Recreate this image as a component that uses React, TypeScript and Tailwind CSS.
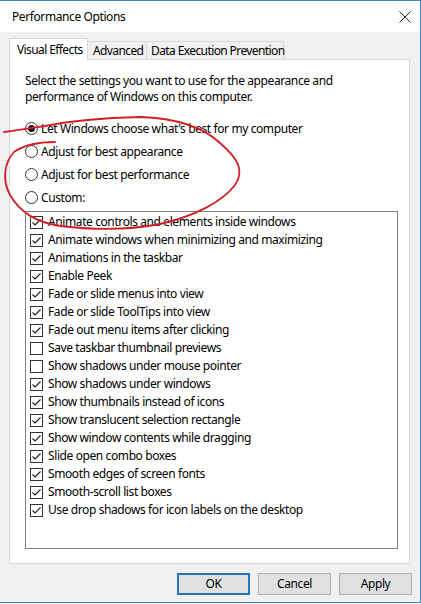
import React from 'react'

const effects: { label: string; checked: boolean }[] = [
  { label: 'Animate controls and elements inside windows', checked: true },
  { label: 'Animate windows when minimizing and maximizing', checked: true },
  { label: 'Animations in the taskbar', checked: true },
  { label: 'Enable Peek', checked: true },
  { label: 'Fade or slide menus into view', checked: true },
  { label: 'Fade or slide ToolTips into view', checked: true },
  { label: 'Fade out menu items after clicking', checked: true },
  { label: 'Save taskbar thumbnail previews', checked: false },
  { label: 'Show shadows under mouse pointer', checked: false },
  { label: 'Show shadows under windows', checked: true },
  { label: 'Show thumbnails instead of icons', checked: true },
  { label: 'Show translucent selection rectangle', checked: true },
  { label: 'Show window contents while dragging', checked: true },
  { label: 'Slide open combo boxes', checked: true },
  { label: 'Smooth edges of screen fonts', checked: true },
  { label: 'Smooth-scroll list boxes', checked: true },
  { label: 'Use drop shadows for icon labels on the desktop', checked: true },
]

const radios = [
  { label: "Let Windows choose what's best for my computer", selected: true },
  { label: 'Adjust for best appearance', selected: false },
  { label: 'Adjust for best performance', selected: false },
  { label: 'Custom:', selected: false },
]

function Radio({ selected }: { selected: boolean }) {
  return (
    <span className="flex h-[13px] w-[13px] shrink-0 items-center justify-center rounded-full border border-[#333333] bg-white">
      {selected && <span className="h-[7px] w-[7px] rounded-full bg-[#1a1a1a]" />}
    </span>
  )
}

function Checkbox({ checked }: { checked: boolean }) {
  return (
    <span className="flex h-[13px] w-[13px] shrink-0 items-center justify-center border border-[#333333] bg-white">
      {checked && (
        <svg width="11" height="11" viewBox="0 0 11 11">
          <polyline points="1.5,5.5 4,8 9.5,2.5" fill="none" stroke="#1a1a1a" strokeWidth="1.1" />
        </svg>
      )}
    </span>
  )
}

function Button({ label, primary }: { label: string; primary?: boolean }) {
  return (
    <div
      className={
        primary
          ? 'flex h-[22px] w-[73px] items-center justify-center border-2 border-[#2a73b8] bg-[#e1e1e1]'
          : 'flex h-[22px] w-[73px] items-center justify-center border border-[#adadad] bg-[#e1e1e1]'
      }
    >
      {label}
    </div>
  )
}

export default function App() {
  return (
    <div className="relative h-[604px] w-[421px] whitespace-nowrap bg-white text-[12px] leading-[16px] tracking-[-0.4px] text-black [font-family:'Noto_Sans',sans-serif]">
      <div className="flex h-[603px] w-[421px] flex-col border-t border-r border-b border-[#3d86cc] bg-[#f0f0f0]">
        {/* title bar */}
        <div className="flex h-[31px] items-center justify-between bg-white pl-[12px] pr-[9px]">
          <span>Performance Options</span>
          <svg width="12" height="12" viewBox="0 0 12 12">
            <path d="M0.5 0.5 L11.5 11.5 M11.5 0.5 L0.5 11.5" stroke="#222" strokeWidth="1" />
          </svg>
        </div>

        {/* tabs */}
        <div className="ml-[9px] mr-[10px] mt-[6px] flex items-end tracking-[-0.6px]">
          <div className="relative z-10 -mb-px flex h-[22px] w-[79px] items-center border border-b-0 border-[#d9d9d9] bg-white pl-[7px]">
            Visual Effects
          </div>
          <div className="flex h-[18px] w-[59px] items-center border border-l-0 border-b-0 border-[#d9d9d9] bg-[#f0f0f0] pl-[5px]">
            Advanced
          </div>
          <div className="flex h-[18px] w-[137px] items-center border border-l-0 border-b-0 border-[#d9d9d9] bg-[#f0f0f0] pl-[4px]">
            Data Execution Prevention
          </div>
        </div>

        {/* panel */}
        <div className="ml-[9px] mr-[10px] flex h-[505px] flex-col border border-[#d9d9d9] bg-white pl-[15px] pr-[11px] pt-[13px]">
          <p>
            Select the settings you want to use for the appearance and
            <br />
            performance of Windows on this computer.
          </p>
          <div className="mt-[12px] flex flex-col">
            {radios.map((r) => (
              <div key={r.label} className="flex h-[23px] items-center gap-[3px]">
                <Radio selected={r.selected} />
                <span>{r.label}</span>
              </div>
            ))}
          </div>
          <div className="mt-[2px] h-[338px] border border-[#828282] pl-[4px] pt-[1px]">
            {effects.map((e) => (
              <div key={e.label} className="flex h-[18px] items-center gap-[5px]">
                <Checkbox checked={e.checked} />
                <span>{e.label}</span>
              </div>
            ))}
          </div>
        </div>

        {/* buttons */}
        <div className="mr-[8px] mt-[9px] flex justify-end gap-[8px]">
          <Button label="OK" primary />
          <Button label="Cancel" />
          <Button label="Apply" />
        </div>
      </div>

      {/* red hand-drawn annotation */}
      <svg className="pointer-events-none absolute left-0 top-0" width="260" height="240" viewBox="0 0 260 240">
        <path
          d="M4 132 C20 130 32 128 45 126 C70 121 100 118 140 117 C170 118 200 124 220 143 C240 160 244 172 235 185 C222 202 195 216 160 224 C130 230 95 230 60 226 C35 222 20 212 10 195 C2 180 4 163 14 152 C24 145 38 142 55 142"
          fill="none"
          stroke="#d21f26"
          strokeWidth="1.8"
          strokeLinecap="round"
        />
      </svg>
    </div>
  )
}
